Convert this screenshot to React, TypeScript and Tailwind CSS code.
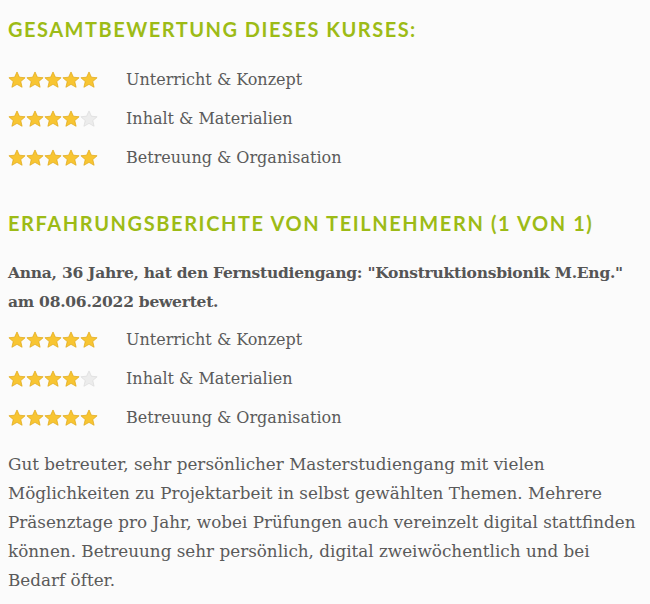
import React from 'react';

const serif = { fontFamily: '"DejaVu Serif", "Liberation Serif", serif' };
const lato = { fontFamily: 'Lato, sans-serif' };

function Star({ filled }: { filled: boolean }) {
  return (
    <svg width="18" height="18" viewBox="0 0 24 24">
      <path
        d="M12 1.3l3.2 7 7.6.7-5.8 5.1 1.8 7.6L12 17.8l-6.8 3.9 1.8-7.6-5.8-5.1 7.6-.7z"
        fill={filled ? '#f8c532' : '#ececec'}
        stroke={filled ? '#e0a918' : '#dcdcdc'}
        strokeWidth="1"
        strokeLinejoin="round"
      />
    </svg>
  );
}

function Rating({ value, label }: { value: number; label: string }) {
  return (
    <div className="flex items-center h-[39px]">
      <div className="flex w-[118px]">
        {[1, 2, 3, 4, 5].map((i) => (
          <Star key={i} filled={i <= value} />
        ))}
      </div>
      <span className="text-[16px] text-[#5a5a5a]" style={serif}>
        {label}
      </span>
    </div>
  );
}

const ratings = [
  { value: 5, label: 'Unterricht & Konzept' },
  { value: 4, label: 'Inhalt & Materialien' },
  { value: 5, label: 'Betreuung & Organisation' },
];

export default function App() {
  return (
    <div className="min-h-screen bg-[#fbfbfb] px-2 pt-[14px]">
      {/* Gesamtbewertung */}
      <h2 className="text-[20px] leading-[30px] tracking-[1.5px] text-[#9dbb16] font-bold" style={lato}>
        GESAMTBEWERTUNG DIESES KURSES:
      </h2>
      <div className="mt-4">
        {ratings.map((r) => (
          <Rating key={r.label} {...r} />
        ))}
      </div>

      {/* Erfahrungsberichte */}
      <h2 className="mt-[31px] text-[20px] leading-[30px] tracking-[1.6px] text-[#9dbb16] font-bold" style={lato}>
        ERFAHRUNGSBERICHTE VON TEILNEHMERN (1 VON 1)
      </h2>
      <p className="mt-5 text-[15.5px] leading-[29px] font-bold tracking-[-0.25px] text-[#555555]" style={serif}>
        Anna, 36 Jahre, hat den Fernstudiengang: "Konstruktionsbionik M.Eng."
        <br />
        am 08.06.2022 bewertet.
      </p>
      <div className="mt-1">
        {ratings.map((r) => (
          <Rating key={r.label} {...r} />
        ))}
      </div>
      <p className="mt-[13px] text-[16.8px] leading-[29px] text-[#5a5a5a]" style={serif}>
        Gut betreuter, sehr persönlicher Masterstudiengang mit vielen Möglichkeiten zu Projektarbeit in
        selbst gewählten Themen. Mehrere Präsenztage pro Jahr, wobei Prüfungen auch vereinzelt digital
        stattfinden können. Betreuung sehr persönlich, digital zweiwöchentlich und bei Bedarf öfter.
      </p>
    </div>
  );
}
